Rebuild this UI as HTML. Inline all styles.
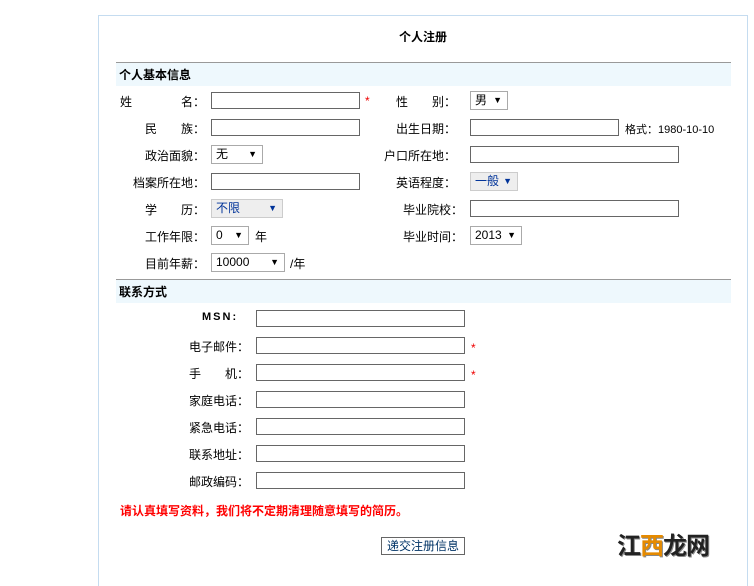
<!DOCTYPE html>
<html><head><meta charset="utf-8"><style>
body{margin:0;width:754px;height:571px;background:#fff;font-family:"Liberation Sans","Noto Sans CJK SC",sans-serif;font-size:12px;color:#000;position:relative;overflow:hidden}
.a{position:absolute;white-space:nowrap}
.panel{position:absolute;left:98px;top:15px;width:648px;height:570px;border:1px solid #c5dcf0;border-bottom:none}
.hd{position:absolute;left:116px;width:615px;height:24px;background:#eef8fd;border-top:1px solid #999;font-weight:bold;font-size:12px;line-height:24px;padding-left:3px;box-sizing:border-box}
.in{position:absolute;height:15px;border:1px solid #666;background:#fff}
.sel{position:absolute;height:19px;margin-top:-1px;border:1px solid #aaa;background:#fff;box-sizing:border-box;line-height:17px;padding-left:4px;font-size:12px}
.sel span{position:absolute;right:5px;font-size:9px}
.r{color:#e00;position:absolute}
</style></head><body>
<div class="panel"></div>
<div class="a" style="left:399px;top:28px;font-weight:bold">个人注册</div>
<div class="hd" style="top:62px">个人基本信息</div>

<div class="a" style="left:120px;top:93px">姓</div><div class="a" style="left:181px;top:93px">名：</div>
<div class="in" style="left:211px;top:92px;width:147px"></div><div class="r" style="left:365px;top:94px">*</div>
<div class="a" style="left:396px;top:93px">性</div><div class="a" style="left:432px;top:93px">别：</div>
<div class="sel" style="left:470px;top:92px;width:38px">男<span>▼</span></div>

<div class="a" style="left:145px;top:120px">民</div><div class="a" style="left:181px;top:120px">族：</div>
<div class="in" style="left:211px;top:119px;width:147px"></div>
<div class="a" style="left:396px;top:120px">出生日期：</div>
<div class="in" style="left:470px;top:119px;width:147px"></div>
<div class="a" style="left:625px;top:121px;font-size:11px">格式：1980-10-10</div>

<div class="a" style="left:145px;top:147px">政治面貌：</div>
<div class="sel" style="left:211px;top:146px;width:52px">无<span>▼</span></div>
<div class="a" style="left:384px;top:147px">户口所在地：</div>
<div class="in" style="left:470px;top:146px;width:207px"></div>

<div class="a" style="left:133px;top:174px">档案所在地：</div>
<div class="in" style="left:211px;top:173px;width:147px"></div>
<div class="a" style="left:396px;top:174px">英语程度：</div>
<div class="sel" style="left:470px;top:173px;width:48px;background:#eee;border-color:#ccc;color:#039">一般<span>▼</span></div>

<div class="a" style="left:145px;top:201px">学</div><div class="a" style="left:181px;top:201px">历：</div>
<div class="sel" style="left:211px;top:200px;width:72px;background:#eee;border-color:#ccc;color:#039">不限<span>▼</span></div>
<div class="a" style="left:403px;top:201px">毕业院校：</div>
<div class="in" style="left:470px;top:200px;width:207px"></div>

<div class="a" style="left:145px;top:228px">工作年限：</div>
<div class="sel" style="left:211px;top:227px;width:38px">0<span>▼</span></div>
<div class="a" style="left:255px;top:228px">年</div>
<div class="a" style="left:403px;top:228px">毕业时间：</div>
<div class="sel" style="left:470px;top:227px;width:52px">2013<span>▼</span></div>

<div class="a" style="left:145px;top:255px">目前年薪：</div>
<div class="sel" style="left:211px;top:254px;width:74px">10000<span>▼</span></div>
<div class="a" style="left:290px;top:255px">/年</div>

<div class="hd" style="top:279px">联系方式</div>
<div class="a" style="left:202px;top:311px;font-weight:bold;letter-spacing:2px;font-size:11px">MSN:</div>
<div class="in" style="left:256px;top:310px;width:207px"></div>
<div class="a" style="left:189px;top:338px">电子邮件：</div>
<div class="in" style="left:256px;top:337px;width:207px"></div><div class="r" style="left:471px;top:341px">*</div>
<div class="a" style="left:189px;top:365px">手</div><div class="a" style="left:225px;top:365px">机：</div>
<div class="in" style="left:256px;top:364px;width:207px"></div><div class="r" style="left:471px;top:368px">*</div>
<div class="a" style="left:189px;top:392px">家庭电话：</div>
<div class="in" style="left:256px;top:391px;width:207px"></div>
<div class="a" style="left:189px;top:419px">紧急电话：</div>
<div class="in" style="left:256px;top:418px;width:207px"></div>
<div class="a" style="left:189px;top:446px">联系地址：</div>
<div class="in" style="left:256px;top:445px;width:207px"></div>
<div class="a" style="left:189px;top:473px">邮政编码：</div>
<div class="in" style="left:256px;top:472px;width:207px"></div>

<div class="a" style="left:120px;top:502px;color:#f00;font-weight:bold">请认真填写资料，我们将不定期清理随意填写的简历。</div>
<div class="a" style="left:381px;top:537px;width:82px;height:16px;border:1px solid #666;color:#036;text-align:center;line-height:16px">递交注册信息</div>
<div class="a" style="left:617px;top:526px;font-size:24px;font-weight:bold;color:#222;letter-spacing:-1px;text-shadow:1px 1px 0 #888">江<span style="color:#e58a00">西</span>龙网</div>
</body></html>
